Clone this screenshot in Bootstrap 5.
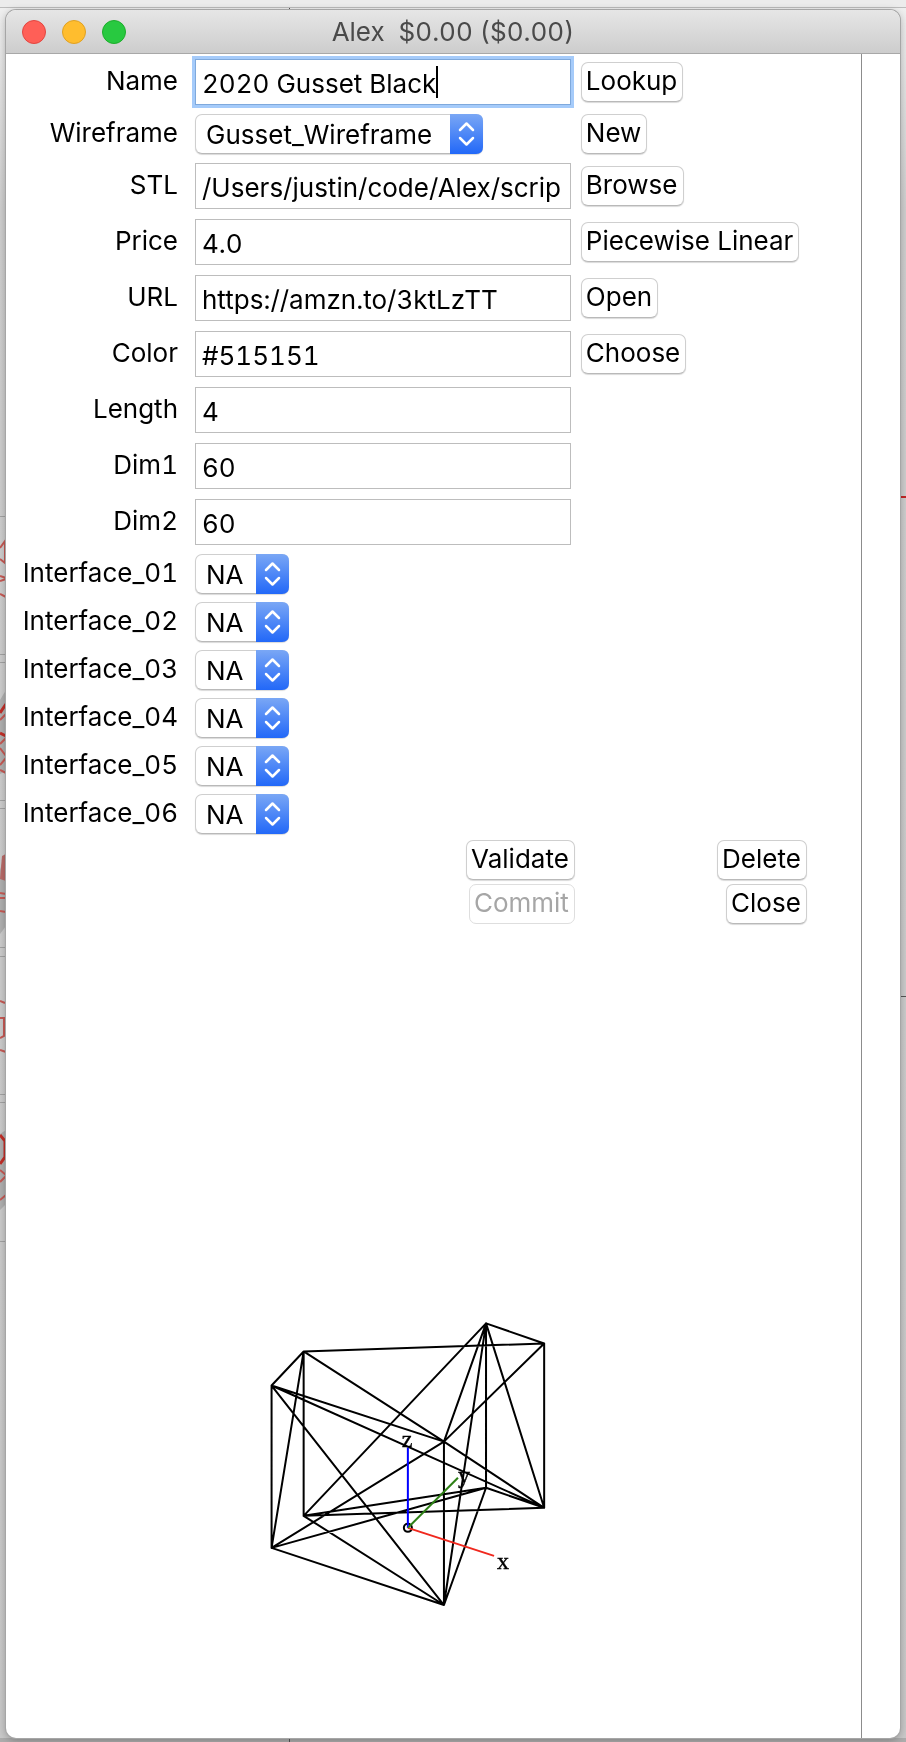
<!DOCTYPE html>
<html lang="en">
<head>
<meta charset="utf-8">
<meta name="viewport" content="width=device-width, initial-scale=1">
<title>Alex</title>
<link href="https://cdn.jsdelivr.net/npm/bootstrap@5.3.0/dist/css/bootstrap.min.css" rel="stylesheet">
<style>
  body { font-family: Inter, "Liberation Sans", sans-serif; font-size: 26px; line-height: 30px; font-variant-numeric: tabular-nums; color: #000; background: #cfcfcf; padding: 10px 6px 4px; }
  .backdrop { position: fixed; inset: 0; width: 100%; height: 100%; z-index: -1; }
  .app-window { border-radius: 10px; overflow: hidden; background: #fff; box-shadow: 0 0 0 1px #a6a6a6, 0 2px 8px rgba(0,0,0,.3); }
  .titlebar { height: 44px; padding: 0 16px; background: linear-gradient(#e6e6e6, #cdcdcd); border-bottom: 1px solid #a8a8a8; color: #4a4a4a; }
  .lights { gap: 16px; flex: 1 1 0; }
  .bar-end { flex: 1 1 0; }
  .light { width: 24px; height: 24px; padding: 0; border-radius: 50%; border: 1px solid; }
  .light-close { background: #ff5f57; border-color: #e24640; }
  .light-min { background: #ffbd2e; border-color: #dfa023; }
  .light-max { background: #28c940; border-color: #1dad2b; }
  .side { width: 41px; border-left: 1px solid #8c8c8c; }
  .form-grid { display: grid; grid-template-columns: 172px minmax(0, 1fr) 232px; grid-auto-rows: 56px; margin-right: 54px; align-items: center; }
  .fields { grid-template-rows: 56px 48px repeat(7, 56px); }
  .interfaces { grid-auto-rows: 48px; }
  .actions { grid-auto-rows: 44px; }
  .form-grid label { text-align: right; padding-bottom: 2px; white-space: nowrap; }
  .field { position: relative; padding: 0 4px 0 17px; }
  .side-btn { padding: 0 0 1px 6px; }
  .text-field { font-size: 26px; line-height: 30px; height: 46px; padding: 2px 0 0 6px; border: 1px solid #bdbdbd; border-radius: 0; color: #000; caret-color: transparent; font-variant-numeric: inherit; }
  .text-field:focus { border-color: #7fa9dc; box-shadow: 0 0 0 3px #a5cbfa; color: #000; }
  .caret-mark { position: absolute; top: 7px; height: 32px; left: 24px; border-right: 2px solid #000; pointer-events: none; white-space: pre; }
  .mac-btn { font-size: 26px; line-height: 30px; height: 40px; padding: 0 5px 2px 4px; border: 1px solid #cfcfcf; border-bottom-color: #b9b9b9; border-radius: 7px; background: #fff; color: #000; box-shadow: 0 1px 1px rgba(0,0,0,.15); white-space: nowrap; }
  .mac-btn:disabled { color: #a6a6a6; background: #fff; border-color: #dedede; opacity: 1; box-shadow: none; }
  .popup { position: relative; display: inline-block; vertical-align: top; }
  .mac-select { appearance: none; font-size: 26px; line-height: 30px; height: 40px; width: 94px; padding: 2px 33px 0 10px; border: 1px solid #cfcfcf; border-bottom-color: #b9b9b9; border-radius: 7px; background: #fff; color: #000; box-shadow: 0 1px 1px rgba(0,0,0,.15); }
  .mac-select.wide { width: 288px; }
  .popup svg { position: absolute; right: 0; top: 0; width: 33px; height: 40px; pointer-events: none; }
  .scene { margin-top: auto; }
  .scene text { font-family: "Liberation Serif", serif; font-size: 24px; stroke: #000; stroke-width: .4px; }
</style>
</head>
<body class="min-vh-100 d-flex flex-column">
<svg class="backdrop" aria-hidden="true">
  <defs>
    <linearGradient id="wall" x1="0" y1="0" x2="0" y2="1"><stop offset="0" stop-color="#f0f0f0"/><stop offset=".12" stop-color="#cfcfcf"/><stop offset="1" stop-color="#c9c9c9"/></linearGradient>
    <linearGradient id="blue" x1="0" y1="0" x2="0" y2="1"><stop offset="0" stop-color="#7aa7f5"/><stop offset="1" stop-color="#2268f8"/></linearGradient>
  </defs>
  <rect width="100%" height="100%" fill="url(#wall)"/>
  <rect width="100%" height="7" fill="#ececec"/>
  <rect y="7" width="100%" height="1" fill="#bcbcbc"/>
  <rect y="1738" width="100%" height="10" fill="#adadad"/>
  <path d="M289.500 8v2M289.500 1738v10M900 996.500h10" stroke="#555"/>
  <path d="M900 497h10" stroke="#c32626" stroke-width="2"/>
  <path d="M0 516.500h6M0 654.500h6M0 662.500h6M0 800.500h6M0 808.500h6M0 947.500h6M0 956.500h6M0 1094.500h6M0 1102.500h6M0 1241.500h6" stroke="#a3a3a3"/>
  <path d="M6 690L0 700v74l6-3zM6 850l-6 20v64l6-8zM6 1130l-6 4v76l6-6z" fill="#b0b0b0"/>
  <path d="M0 548l5-7v22l-5-4M0 576l6 2M0 581l6-2M0 594l6 3M0 720l6-6M0 744l6-6M0 748l6 8M0 765l6-7M0 770l6 3M0 893l6 1M0 898h6M0 911l6 1M0 1001l5 2M0 1018h4v18l-4 2M0 1050l6 2M0 1170l6 5M0 1182l6-6M0 1200l6-5" fill="none" stroke="#c65a55" stroke-width="2"/>
  <path d="M6 704l-6 9M0 733l6 3M0 1135l5 6v16l-5 7" fill="none" stroke="#c22f28" stroke-width="3"/>
  <path d="M2 856l4-2v27l-6-2z" fill="#b96b69"/>
</svg>

<main class="app-window flex-grow-1 d-flex flex-column">
  <header class="titlebar d-flex align-items-center">
    <div class="lights d-flex">
      <button type="button" class="light light-close" aria-label="Close window"></button>
      <button type="button" class="light light-min" aria-label="Minimize window"></button>
      <button type="button" class="light light-max" aria-label="Zoom window"></button>
    </div>
    <div>Alex&nbsp; $0.00 ($0.00)</div>
    <div class="bar-end"></div>
  </header>

  <div class="flex-grow-1 d-flex">
    <form class="flex-grow-1 d-flex flex-column">
      <div class="form-grid fields">
        <label for="name">Name</label>
        <div class="field"><input id="name" class="form-control text-field" value="2020 Gusset Black" autofocus><span id="caret" class="caret-mark" aria-hidden="true"></span></div>
        <div class="side-btn"><button type="button" class="btn mac-btn">Lookup</button></div>

        <label for="wire">Wireframe</label>
        <div class="field"><span class="popup"><select id="wire" class="mac-select wide"><option>Gusset_Wireframe</option></select><svg viewBox="0 0 33 40"><path d="M0 0h26q7 0 7 7v26q0 7-7 7H0z" fill="url(#blue)"/><path d="M10 16l6.500-6.500L23 16M10 24l6.500 6.500L23 24" fill="none" stroke="#fff" stroke-width="2.500" stroke-linecap="round" stroke-linejoin="round"/></svg></span></div>
        <div class="side-btn"><button type="button" class="btn mac-btn">New</button></div>

        <label for="stl">STL</label>
        <div class="field"><input id="stl" class="form-control text-field" value="/Users/justin/code/Alex/scrip"></div>
        <div class="side-btn"><button type="button" class="btn mac-btn">Browse</button></div>

        <label for="price">Price</label>
        <div class="field"><input id="price" class="form-control text-field" value="4.0"></div>
        <div class="side-btn"><button type="button" class="btn mac-btn">Piecewise Linear</button></div>

        <label for="url">URL</label>
        <div class="field"><input id="url" class="form-control text-field" value="https://amzn.to/3ktLzTT"></div>
        <div class="side-btn"><button type="button" class="btn mac-btn">Open</button></div>

        <label for="color">Color</label>
        <div class="field"><input id="color" class="form-control text-field" value="#515151"></div>
        <div class="side-btn"><button type="button" class="btn mac-btn">Choose</button></div>

        <label for="len">Length</label>
        <div class="field"><input id="len" class="form-control text-field" value="4"></div><div></div>

        <label for="dim1">Dim1</label>
        <div class="field"><input id="dim1" class="form-control text-field" value="60"></div><div></div>

        <label for="dim2">Dim2</label>
        <div class="field"><input id="dim2" class="form-control text-field" value="60"></div><div></div>
      </div>

      <div class="form-grid interfaces">
        <label for="i1">Interface_01</label>
        <div class="field"><span class="popup"><select id="i1" class="mac-select"><option>NA</option></select><svg viewBox="0 0 33 40"><path d="M0 0h26q7 0 7 7v26q0 7-7 7H0z" fill="url(#blue)"/><path d="M10 16l6.500-6.500L23 16M10 24l6.500 6.500L23 24" fill="none" stroke="#fff" stroke-width="2.500" stroke-linecap="round" stroke-linejoin="round"/></svg></span></div><div></div>
        <label for="i2">Interface_02</label>
        <div class="field"><span class="popup"><select id="i2" class="mac-select"><option>NA</option></select><svg viewBox="0 0 33 40"><path d="M0 0h26q7 0 7 7v26q0 7-7 7H0z" fill="url(#blue)"/><path d="M10 16l6.500-6.500L23 16M10 24l6.500 6.500L23 24" fill="none" stroke="#fff" stroke-width="2.500" stroke-linecap="round" stroke-linejoin="round"/></svg></span></div><div></div>
        <label for="i3">Interface_03</label>
        <div class="field"><span class="popup"><select id="i3" class="mac-select"><option>NA</option></select><svg viewBox="0 0 33 40"><path d="M0 0h26q7 0 7 7v26q0 7-7 7H0z" fill="url(#blue)"/><path d="M10 16l6.500-6.500L23 16M10 24l6.500 6.500L23 24" fill="none" stroke="#fff" stroke-width="2.500" stroke-linecap="round" stroke-linejoin="round"/></svg></span></div><div></div>
        <label for="i4">Interface_04</label>
        <div class="field"><span class="popup"><select id="i4" class="mac-select"><option>NA</option></select><svg viewBox="0 0 33 40"><path d="M0 0h26q7 0 7 7v26q0 7-7 7H0z" fill="url(#blue)"/><path d="M10 16l6.500-6.500L23 16M10 24l6.500 6.500L23 24" fill="none" stroke="#fff" stroke-width="2.500" stroke-linecap="round" stroke-linejoin="round"/></svg></span></div><div></div>
        <label for="i5">Interface_05</label>
        <div class="field"><span class="popup"><select id="i5" class="mac-select"><option>NA</option></select><svg viewBox="0 0 33 40"><path d="M0 0h26q7 0 7 7v26q0 7-7 7H0z" fill="url(#blue)"/><path d="M10 16l6.500-6.500L23 16M10 24l6.500 6.500L23 24" fill="none" stroke="#fff" stroke-width="2.500" stroke-linecap="round" stroke-linejoin="round"/></svg></span></div><div></div>
        <label for="i6">Interface_06</label>
        <div class="field"><span class="popup"><select id="i6" class="mac-select"><option>NA</option></select><svg viewBox="0 0 33 40"><path d="M0 0h26q7 0 7 7v26q0 7-7 7H0z" fill="url(#blue)"/><path d="M10 16l6.500-6.500L23 16M10 24l6.500 6.500L23 24" fill="none" stroke="#fff" stroke-width="2.500" stroke-linecap="round" stroke-linejoin="round"/></svg></span></div><div></div>
      </div>

      <div class="form-grid actions">
        <div></div>
        <div class="text-end"><button type="button" class="btn mac-btn">Validate</button></div>
        <div class="text-end"><button type="button" class="btn mac-btn">Delete</button></div>
        <div></div>
        <div class="text-end"><button type="button" class="btn mac-btn" disabled>Commit</button></div>
        <div class="text-end"><button type="button" class="btn mac-btn">Close</button></div>
      </div>

      <svg class="scene w-100" viewBox="6 1137 853 600" role="img" aria-label="Gusset wireframe">
        <g fill="none" stroke-width="2">
          <path stroke="#000" stroke-linejoin="round" d="M303 1351L271 1385V1547L303 1351L543 1343V1507L303 1515V1351L443 1441L543 1507L271 1385L443 1441V1604L271 1385M443 1441L485 1323L543 1343L443 1441L271 1547L443 1604L303 1515L485 1323V1487L543 1507L485 1323L443 1604L485 1487L303 1515M271 1547L485 1487"/>
          <circle cx="407" cy="1527" r="4" stroke="#000"/>
        </g>
        <text x="457" y="1482">y</text>
        <g fill="none" stroke-width="2">
          <path stroke="#00f" d="M407 1527V1447"/>
          <path stroke="#f0281e" d="M407 1527L493 1555"/>
          <path stroke="#2e8016" d="M407 1527L457 1477"/>
        </g>
        <text x="401" y="1446">z</text>
        <text x="496" y="1568">x</text>
      </svg>
    </form>
    <aside class="side"></aside>
  </div>
</main>
<script src="https://cdn.jsdelivr.net/npm/bootstrap@5.3.0/dist/js/bootstrap.bundle.min.js"></script>
<script>
  // Keep the drawn insertion point at the end of the name.
  const nameBox = document.getElementById('name');
  const caret = document.getElementById('caret');
  function placeCaret() {
    caret.style.left = '24px';
    caret.textContent = nameBox.value;
    const w = Math.round(caret.getBoundingClientRect().width);
    caret.textContent = '';
    caret.style.left = (22 + w) + 'px';
  }
  nameBox.addEventListener('input', placeCaret);
  placeCaret();
</script>
</body>
</html>
